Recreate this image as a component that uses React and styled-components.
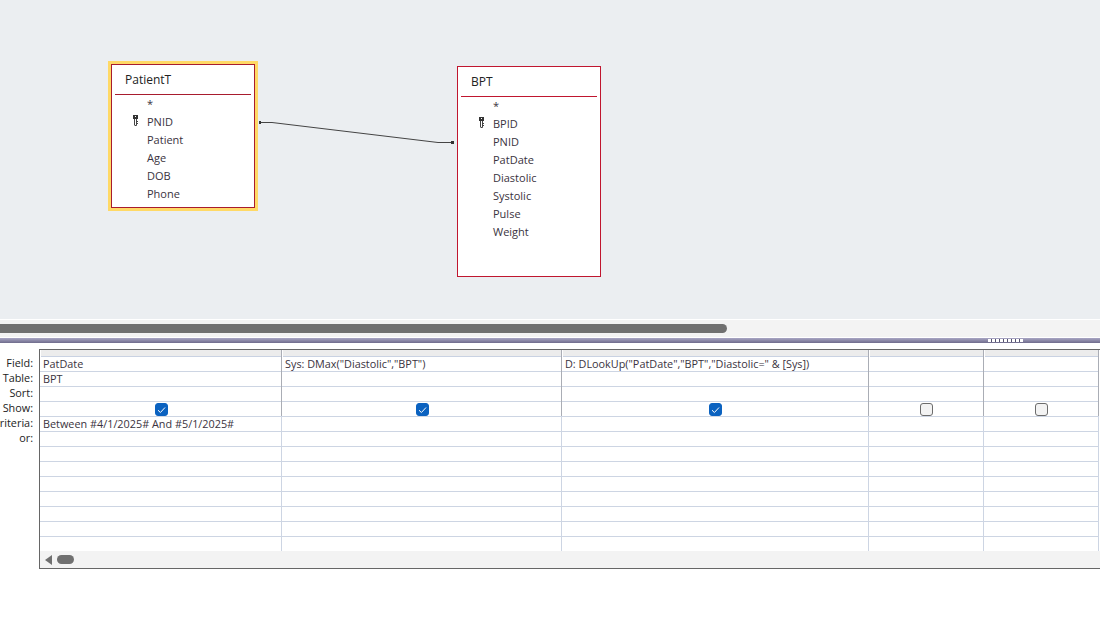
import React from "react";
import styled, { createGlobalStyle } from "styled-components";

const GlobalStyle = createGlobalStyle`
  html, body {
    margin: 0;
    padding: 0;
    background: #fff;
    font-family: "Open Sans", "Noto Sans", "Liberation Sans", sans-serif;
    overflow: hidden;
  }
`;

const Page = styled.div`
  width: 1100px;
  height: 641px;
  display: flex;
  flex-direction: column;
`;

const Canvas = styled.div`
  position: relative;
  height: 319px;
  background: #ebeef1;
`;

const TableBox = styled.div`
  position: absolute;
  left: ${(p) => p.$left}px;
  top: ${(p) => p.$top}px;
  width: ${(p) => p.$width}px;
  height: ${(p) => p.$height}px;
  box-sizing: border-box;
  background: #fff;
  border: 1px solid ${(p) => (p.$selected ? "#a81c2e" : "#c0162f")};
  padding: 0 3px;
  ${(p) => p.$selected && "outline: 3px solid #ffd966;"}
`;

const TableTitle = styled.div`
  height: 29px;
  line-height: 30px;
  padding-left: 10px;
  border-bottom: 1px solid ${(p) => (p.$selected ? "#a81c2e" : "#c0162f")};
  font-size: 12px;
  color: #222;
`;

const FieldRow = styled.div`
  display: flex;
  align-items: center;
  height: 18px;
  box-sizing: border-box;
  padding-bottom: 2px;
  font-size: 11px;
  color: #3a3340;
`;

const KeySlot = styled.span`
  width: 32px;
  display: flex;
  justify-content: flex-end;
  padding: 0 8px 2px 0;
  box-sizing: border-box;
`;

const Relation = styled.svg`
  position: absolute;
  left: 0;
  top: 0;
  pointer-events: none;
`;

const Track = styled.div`
  height: 19px;
  box-sizing: border-box;
  padding-top: 4px;
  background: #f3f3f3;
  border-top: 1px solid #fff;
  border-bottom: 1px solid #fff;
`;

const Thumb = styled.div`
  width: 727px;
  height: 9px;
  background: #707070;
  border-radius: 0 5px 5px 0;
`;

const Splitter = styled.div`
  position: relative;
  height: 5px;
  background: linear-gradient(#a9a6c4, #6f6c8c);
`;

const Grip = styled.div`
  position: absolute;
  left: 988px;
  top: 1px;
  width: 35px;
  height: 3px;
  background: repeating-linear-gradient(90deg, #fff 0 3px, #55536e 3px 4px);
`;

const DesignArea = styled.div`
  display: flex;
  margin-top: 6px;
`;

const LabelColumn = styled.div`
  width: 39px;
  padding-top: 6px;
  overflow: hidden;
`;

const RowLabel = styled.div`
  display: flex;
  justify-content: flex-end;
  height: 15px;
  line-height: 15px;
  font-size: 10.85px;
  color: #222;
  white-space: nowrap;
  padding-right: 6px;
`;

const GridFrame = styled.div`
  width: 1061px;
  height: 220px;
  box-sizing: border-box;
  border: solid #666;
  border-width: 1px 0 1px 1px;
  display: flex;
  flex-direction: column;
`;

const GridBody = styled.div`
  display: flex;
  flex: 1;
`;

const Column = styled.div`
  width: ${(p) => p.$width}px;
  flex: none;
  box-sizing: border-box;
  border-right: 1px solid #c9d2e2;
  border-image: linear-gradient(#aaadb5 0 66px, #cdd5e3 66px) 1;
`;

const ColumnHead = styled.div`
  height: 6px;
  background: #ececec;
  border-bottom: 1px solid #c9d2e2;
  margin-left: 1px;
`;

const Cell = styled.div`
  height: 15px;
  box-sizing: border-box;
  border-bottom: 1px solid #cdd5e3;
  padding-left: 3px;
  font-size: 10.85px;
  line-height: 14px;
  color: #3a3340;
  white-space: nowrap;
  overflow: hidden;
  display: flex;
  align-items: center;
  &:last-child {
    height: 14px;
    border-bottom: none;
  }
  ${(p) => p.$center && "justify-content: center; padding-left: 1px; overflow: visible;"}
`;

const Check = styled.span`
  width: 13px;
  height: 13px;
  box-sizing: border-box;
  border-radius: 3px;
  display: flex;
  align-items: center;
  justify-content: center;
  margin-top: 1px;
  background: ${(p) => (p.$on ? "#0b62c0" : "#f3f3f3")};
  border: 1px solid ${(p) => (p.$on ? "#0b62c0" : "#6c6c6c")};
`;

const BottomBar = styled.div`
  height: 17px;
  background: #f3f3f3;
  display: flex;
  align-items: center;
  gap: 5px;
  padding-left: 5px;
`;

const ArrowLeft = styled.span`
  width: 0;
  height: 0;
  border-style: solid;
  border-width: 5px 7px 5px 0;
  border-color: transparent #707070 transparent transparent;
`;

const MiniThumb = styled.span`
  width: 17px;
  height: 9px;
  border-radius: 5px;
  background: #707070;
`;

const KeyIcon = () => (
  <svg width="7" height="11" viewBox="0 0 7 11">
    <rect x="1" y="0" width="5" height="4" fill="#333" />
    <rect x="3" y="1" width="1" height="1" fill="#fff" />
    <path d="M2.5 4v6M4.5 4v6.5H2.5M4.5 6.5h1.5M4.5 8.5h1.5" stroke="#444" strokeWidth="1" fill="none" />
  </svg>
);

const Tick = () => (
  <svg width="9" height="8" viewBox="0 0 9 8">
    <path d="M1 4.2l2.4 2.3L8 1.5" stroke="#fff" strokeWidth="1" fill="none" />
  </svg>
);

const patientFields = [["*"], ["PNID", true], ["Patient"], ["Age"], ["DOB"], ["Phone"]];
const bptFields = [["*"], ["BPID", true], ["PNID"], ["PatDate"], ["Diastolic"], ["Systolic"], ["Pulse"], ["Weight"]];
const labels = ["Field:", "Table:", "Sort:", "Show:", "Criteria:", "or:"];

const columns = [
  { width: 242, field: "PatDate", table: "BPT", show: true, criteria: "Between #4/1/2025# And #5/1/2025#" },
  { width: 280, field: 'Sys: DMax("Diastolic","BPT")', show: true },
  { width: 307, field: 'D: DLookUp("PatDate","BPT","Diastolic=" & [Sys])', show: true },
  { width: 115 },
  { width: 115 },
];

const DesignTable = ({ title, fields, ...rest }) => (
  <TableBox {...rest}>
    <TableTitle $selected={rest.$selected}>{title}</TableTitle>
    {fields.map(([name, isKey]) => (
      <FieldRow key={name}>
        <KeySlot>{isKey && <KeyIcon />}</KeySlot>
        {name}
      </FieldRow>
    ))}
  </TableBox>
);

const App = () => (
  <Page>
    <GlobalStyle />
    <Canvas>
      <DesignTable title="PatientT" fields={patientFields} $left={111} $top={64} $width={144} $height={144} $selected />
      <DesignTable title="BPT" fields={bptFields} $left={457} $top={66} $width={144} $height={211} />
      <Relation width="1100" height="319">
        <path d="M260 122.5H272L438 142.5H452" stroke="#444" strokeWidth="1" fill="none" />
        <rect x="259" y="121" width="2" height="3" fill="#333" />
        <rect x="451" y="141" width="3" height="3" fill="#333" />
      </Relation>
    </Canvas>
    <Track>
      <Thumb />
    </Track>
    <Splitter>
      <Grip />
    </Splitter>
    <DesignArea>
      <LabelColumn>
        {labels.map((l) => (
          <RowLabel key={l}>{l}</RowLabel>
        ))}
      </LabelColumn>
      <GridFrame>
        <GridBody>
          {columns.map((c, i) => (
            <Column key={i} $width={c.width}>
              <ColumnHead />
              <Cell>{c.field}</Cell>
              <Cell>{c.table}</Cell>
              <Cell />
              <Cell $center>
                <Check $on={c.show}>{c.show && <Tick />}</Check>
              </Cell>
              <Cell>{c.criteria}</Cell>
              {Array.from({ length: 8 }).map((_, n) => (
                <Cell key={n} />
              ))}
            </Column>
          ))}
        </GridBody>
        <BottomBar>
          <ArrowLeft />
          <MiniThumb />
        </BottomBar>
      </GridFrame>
    </DesignArea>
  </Page>
);

export default App;
